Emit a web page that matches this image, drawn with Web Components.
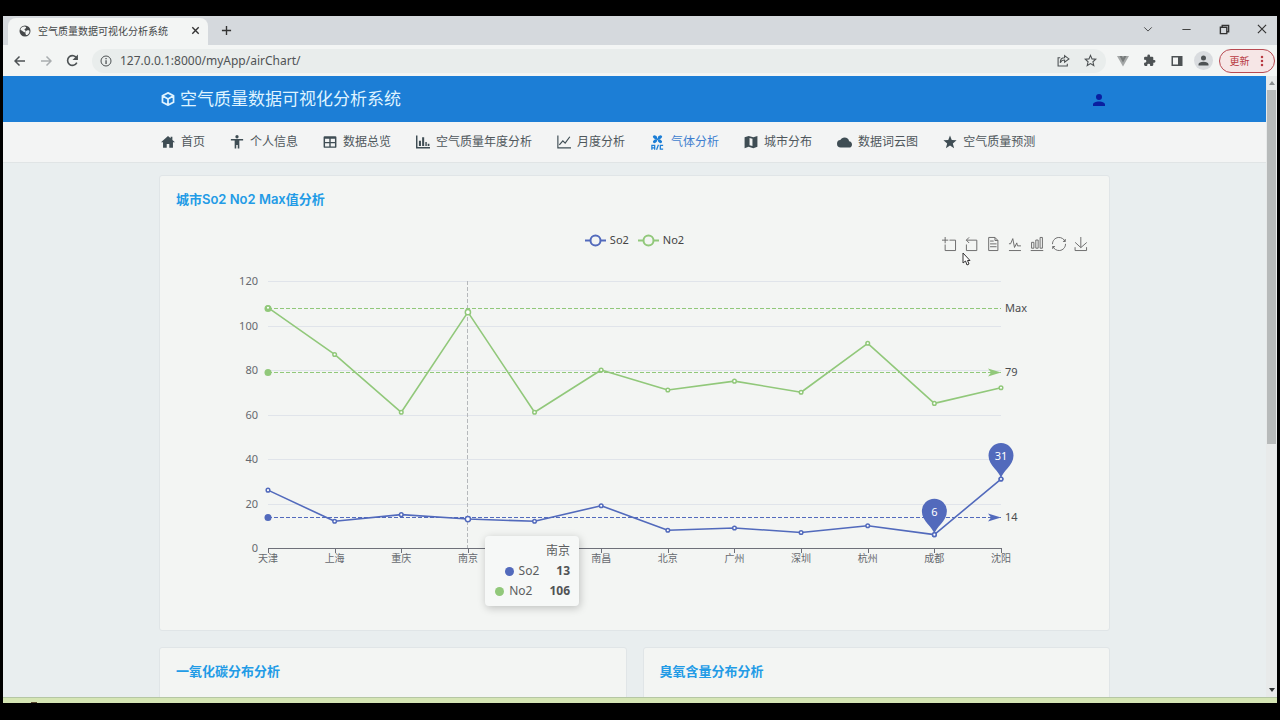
<!DOCTYPE html>
<html lang="zh-CN">
<head>
<meta charset="utf-8">
<meta name="viewport" content="width=device-width, initial-scale=1">
<title>空气质量数据可视化分析系统</title>
<style>
  html, body { height: 100%; margin: 0; }
  body {
    background: #000;
    overflow: hidden;
    font-family: "Noto Sans", "Noto Sans CJK SC", sans-serif;
    color: #495057;
  }
</style>
</head>
<body>
<desktop-screen>
  <browser-window>
    <site-header></site-header>
    <site-nav>
      <nav-item icon="home">首页</nav-item>
      <nav-item icon="person">个人信息</nav-item>
      <nav-item icon="table">数据总览</nav-item>
      <nav-item icon="bars">空气质量年度分析</nav-item>
      <nav-item icon="trend">月度分析</nav-item>
      <nav-item icon="aircon" active>气体分析</nav-item>
      <nav-item icon="map">城市分布</nav-item>
      <nav-item icon="cloud">数据词云图</nav-item>
      <nav-item icon="star">空气质量预测</nav-item>
    </site-nav>
    <card-grid>
      <panel-card wide><span slot="title">城市So2 No2 Max值分析</span><line-chart></line-chart></panel-card>
      <panel-card><span slot="title">一氧化碳分布分析</span></panel-card>
      <panel-card><span slot="title">臭氧含量分布分析</span></panel-card>
    </card-grid>
  </browser-window>
</desktop-screen>

<script>
const mount = (el, html) => { el.attachShadow({ mode: "open" }).innerHTML = html; };

const ICONS = {
  globe: '<circle cx="12" cy="12" r="11"/><path fill="#f3f5f4" d="M10 3c3 0 5 1 4 3s-3 1-3 3 3 1 2 4-4 1-6-1-4-1-4-3 2-5 7-6zM16 11c3-1 5 0 5 2s-2 6-5 7-2-2-3-3 0-5 3-6z"/>',
  close: '<path class="s" d="M5 5l14 14M19 5L5 19"/>',
  plus: '<path class="s" d="M12 2v20M2 12h20"/>',
  chevron: '<path class="s" d="M3 8l9 9 9-9"/>',
  minimize: '<path class="s" d="M3 12h18"/>',
  restoreWin: '<path class="s" d="M3 7h14v14H3zM7 7V3h14v14h-4"/>',
  back: '<path class="s" d="M22 12H3M11 3l-9 9 9 9"/>',
  forward: '<path class="s" d="M2 12h19M13 3l9 9-9 9"/>',
  reload: '<path class="s" d="M20 16a9 9 0 1 1 0-8"/><path d="M22 1v10H12z"/>',
  info: '<circle class="s" cx="12" cy="12" r="10"/><path d="M10.8 10.5h2.6V18h-2.6zM10.8 6h2.6v2.6h-2.6z"/>',
  share: '<path class="s" d="M6 7H2v15h17v-4M14 3l8 6-8 6v-4c-4 0-6 1-8 5 0-6 3-9 8-9z"/>',
  starLine: '<path class="s" d="M12 2.5l2.8 6.5 7 .6-5.3 4.7 1.6 7L12 17.6l-6.1 3.7 1.6-7L2.200 9.600l7-.6z"/>',
  vue: '<path fill="#a5a8a8" d="M0 2h24L12 23z"/><path fill="#777b7b" d="M5 2h5l2 4 2-4h5l-7 13z"/>',
  puzzle: '<path d="M20.5 11H19V7a2 2 0 0 0-2-2h-4V3.5a2.5 2.5 0 0 0-5 0V5H4a2 2 0 0 0-2 2v3.8h1.5a2.7 2.7 0 0 1 0 5.4H2V20a2 2 0 0 0 2 2h3.8v-1.5a2.7 2.7 0 0 1 5.4 0V22H17a2 2 0 0 0 2-2v-4h1.5a2.5 2.5 0 0 0 0-5z"/>',
  panel: '<path fill-rule="evenodd" d="M1 2h22v20H1zM4 5v14h10V5z"/>',
  user: '<path d="M12 4a4 4 0 1 1 0 8 4 4 0 0 1 0-8m0 10c4.420 0 8 1.790 8 4v2H4v-2c0-2.210 3.580-4 8-4z"/>',
  dots: '<circle cx="12" cy="4" r="2.5"/><circle cx="12" cy="12" r="2.5"/><circle cx="12" cy="20" r="2.5"/>',
  cube: '<path class="s" d="M12 1.5l9.5 5v11L12 22.5l-9.5-5v-11zM2.5 6.5L12 12l9.5-5.5M12 12v10.5"/>',
  home: '<path d="M12 1.5L0 12.5h3.5V22h6.300v-6.500h4.400V22h6.300v-9.500H24L19.500 8.400V3h-3v2.600z"/>',
  person: '<circle cx="12" cy="3" r="2.8"/><path d="M1.5 7h21v2.5H16V23h-2.700v-6h-2.600v6H8V9.500H1.500z"/>',
  table: '<path fill-rule="evenodd" d="M3 2h18a2 2 0 0 1 2 2v16a2 2 0 0 1-2 2H3a2 2 0 0 1-2-2V4a2 2 0 0 1 2-2zM3.5 6.500v5.300h7.300V6.500zM13.200 6.500v5.300h7.300V6.500zM3.500 14.300v5.200h7.300v-5.200zM13.200 14.300v5.200h7.300v-5.200z"/>',
  bars: '<path d="M0 1h2.500v19.500H24V23H0zM5 10h3.500v9H5zM10.500 4H14v15h-3.500zM16 12h2.500v7H16zM20 15h3v4h-3z"/>',
  trend: '<path class="s" d="M1.5 1v21H24M4 17l6-7 4 4 8-11"/>',
  aircon: '<g><ellipse cx="8" cy="3.5" rx="3.6" ry="2.6" transform="rotate(35 8 3.5)"/><ellipse cx="16" cy="3.5" rx="3.6" ry="2.6" transform="rotate(-35 16 3.5)"/><ellipse cx="8" cy="10" rx="3.6" ry="2.6" transform="rotate(-35 8 10)"/><ellipse cx="16" cy="10" rx="3.6" ry="2.6" transform="rotate(35 16 10)"/><path class="s" d="M8 3.5l8 6.5M16 3.5L8 10"/></g><path class="s" d="M3 23.500v-7h4.500v7M3 20.500h4.500M10.500 23.500l3-8M21 16.500h-4.500v6H21"/>',
  map: '<path fill-rule="evenodd" d="M1 4l7-2.5 8 2.5 7-2.500V20l-7 2.500L8 20l-7 2.500zM9.500 5v12.500l5 1.500V6.500z"/>',
  cloud: '<path d="M19.350 10.040A7.490 7.490 0 0 0 12 4C9.110 4 6.600 5.640 5.350 8.040A5.994 5.994 0 0 0 0 14a6 6 0 0 0 6 6h13a5 5 0 0 0 5-5c0-2.640-2.050-4.780-4.650-4.960z"/>',
  star: '<path d="M12 1l3 7.700 8.300.5-6.400 5.300 2.100 8.100L12 18.100 5 22.600l2.100-8.100L.7 9.200 9 8.700z"/>'
};

/* Single-colour glyph drawn on a 24-unit grid. */
customElements.define("app-icon", class extends HTMLElement {
  connectedCallback() {
    const size = this.getAttribute("size") || 14;
    mount(this, `<style>
      :host { display: block; flex: none; width: ${size}px; height: ${size}px; }
      svg { display: block; width: 100%; height: 100%; fill: currentColor; }
      .s { fill: none; stroke: currentColor; stroke-width: ${this.getAttribute("stroke") || 2}; }
    </style><svg viewBox="0 0 24 24" aria-hidden="true">${ICONS[this.getAttribute("name")]}</svg>`);
  }
});

customElements.define("desktop-screen", class extends HTMLElement {
  connectedCallback() {
    mount(this, `<style>
      :host { display: flex; flex-direction: column; box-sizing: border-box; height: 100vh; padding: 16px 3px 17px; }
      ::slotted(*) { flex: 1; min-height: 0; }
      .taskbar { height: 5px; border-top: 1px solid #b5c7a4; background: #d5e5b4; padding-left: 28px; display: flex; align-items: flex-end; flex: none; }
      .taskbar i { width: 6px; height: 1px; background: #5a4a30; }
    </style><slot></slot><div class="taskbar"><i></i></div>`);
  }
});

customElements.define("browser-window", class extends HTMLElement {
  connectedCallback() {
    mount(this, `<style>
      :host { display: flex; flex-direction: column; background: #f3f5f4; }
      button { border: 0; background: none; padding: 0; margin: 0; font: inherit; color: inherit; display: grid; place-items: center; }
      .tabs { display: flex; align-items: flex-end; height: 29px; padding-left: 5px; background: #d5d9dd; color: #333; flex: none; }
      .tab { display: flex; align-items: center; box-sizing: border-box; width: 200px; height: 27px; padding: 0 7px 2px 11px; border-radius: 8px 8px 0 0; background: #f3f5f4; font-size: 10px; color: #45484a; }
      .tab span { flex: 1; padding-left: 7px; white-space: nowrap; }
      .tab button { width: 12px; height: 12px; color: #333; }
      .new { width: 36px; height: 29px; }
      .win { display: flex; gap: 8px; margin-left: auto; height: 26px; align-self: flex-start; }
      .win button { width: 30px; }
      .bar { display: flex; align-items: center; height: 31px; padding: 0 2px 0 4px; flex: none; color: #4d5254; }
      .bar button { width: 26px; height: 24px; }
      .bar .ext button { width: 27px; }
      .off { color: #a9adaf; }
      .address { display: flex; align-items: center; flex: 1; height: 24px; margin: 0 3px 0 7px; padding: 0 2px 0 8px; border-radius: 12px; background: #e9edec; }
      .address button { width: 27px; }
      input { flex: 1; min-width: 0; border: 0; padding: 0; margin-left: 8px; background: none; outline: 0; font: 12px "Noto Sans", sans-serif; color: #505355; }
      .ext { display: flex; }
      .avatar { display: grid; place-items: center; width: 19px; height: 19px; border-radius: 50%; background: #d9dcdf; }
      .bar .update { display: flex; align-items: center; justify-content: center; gap: 6px; box-sizing: border-box; width: 56px; margin-left: 2px; padding-left: 3px; border: 1px solid #b84a52; border-radius: 12px; background: #f6e6e6; color: #b83a42; font-size: 10px; }
      .view { flex: 1; min-height: 0; display: flex; }
      .page { flex: 1; min-width: 0; overflow: hidden; background: #e9eeef; }
      .scroll { display: flex; flex-direction: column; align-items: center; width: 11px; background: #e8eaea; flex: none; }
      .up, .down { height: 14px; display: grid; place-items: center; flex: none; }
      .up::before, .down::before { content: ""; border: 3px solid transparent; }
      .up::before { border-bottom: 4px solid #8a8d8e; border-top: 0; }
      .down::before { border-top: 4px solid #303334; border-bottom: 0; }
      .thumb { flex: 353; width: 9px; background: #b7baba; }
      .track { flex: 239; }
    </style>
    <div class="tabs">
      <div class="tab"><app-icon name="globe" size="12"></app-icon><span>空气质量数据可视化分析系统</span><button aria-label="关闭标签页"><app-icon name="close" size="11" stroke="3"></app-icon></button></div>
      <button class="new" aria-label="新标签页"><app-icon name="plus" size="11" stroke="3"></app-icon></button>
      <div class="win">
        <button aria-label="搜索标签页"><app-icon name="chevron" size="10"></app-icon></button>
        <button aria-label="最小化"><app-icon name="minimize" size="11"></app-icon></button>
        <button aria-label="还原"><app-icon name="restoreWin" size="11" stroke="3"></app-icon></button>
        <button aria-label="关闭"><app-icon name="close" size="14"></app-icon></button>
      </div>
    </div>
    <div class="bar">
      <button aria-label="后退"><app-icon name="back" size="12" stroke="3"></app-icon></button>
      <button class="off" aria-label="前进"><app-icon name="forward" size="12" stroke="3"></app-icon></button>
      <button aria-label="刷新"><app-icon name="reload" size="13" stroke="3"></app-icon></button>
      <div class="address">
        <app-icon name="info" size="12"></app-icon>
        <input type="text" aria-label="地址" value="127.0.0.1:8000/myApp/airChart/">
        <button aria-label="分享"><app-icon name="share" size="13"></app-icon></button>
        <button aria-label="收藏"><app-icon name="starLine" size="13"></app-icon></button>
      </div>
      <div class="ext">
        <button aria-label="Vue"><app-icon name="vue" size="12"></app-icon></button>
        <button aria-label="扩展程序"><app-icon name="puzzle" size="13"></app-icon></button>
        <button aria-label="侧边栏"><app-icon name="panel" size="12"></app-icon></button>
        <button aria-label="用户"><span class="avatar"><app-icon name="user" size="15"></app-icon></span></button>
      </div>
      <button class="update">更新<app-icon name="dots" size="12"></app-icon></button>
    </div>
    <div class="view">
      <div class="page"><slot></slot></div>
      <div class="scroll"><div class="up"></div><div class="thumb"></div><div class="track"></div><div class="down"></div></div>
    </div>`);
  }
});

customElements.define("site-header", class extends HTMLElement {
  connectedCallback() {
    mount(this, `<style>
      :host { display: block; background: #1c7ed6; }
      .inner { display: flex; align-items: center; justify-content: space-between; box-sizing: border-box; max-width: 951px; height: 46px; margin: 0 auto; padding: 0 2px; }
      a { display: flex; align-items: center; gap: 5px; color: #dff3ff; font-size: 17px; line-height: 24px; text-decoration: none; }
      button { border: 0; background: none; padding: 2px 0 0; color: #0a1fa0; }
    </style>
    <div class="inner"><a href="#"><app-icon name="cube" size="14" stroke="3"></app-icon>空气质量数据可视化分析系统</a>
    <button aria-label="账户"><app-icon name="user" size="18"></app-icon></button></div>`);
  }
});

customElements.define("site-nav", class extends HTMLElement {
  connectedCallback() {
    mount(this, `<style>
      :host { display: block; background: #f3f4f4; border-bottom: 1px solid #e0e4e5; }
      nav { display: flex; align-items: center; gap: 25px; box-sizing: border-box; max-width: 951px; height: 40px; margin: 0 auto; padding: 0 2px; }
    </style><nav><slot></slot></nav>`);
  }
});

customElements.define("nav-item", class extends HTMLElement {
  connectedCallback() {
    mount(this, `<style>
      :host { display: block; }
      a { display: flex; align-items: center; gap: 6px; color: #4f575c; font-size: 12px; line-height: 18px; white-space: nowrap; text-decoration: none; }
      app-icon { color: #3f4d54; }
      :host([active]) a { color: #3f7fcf; }
      :host([active]) app-icon { color: #1c7ed6; }
    </style><a href="#"><app-icon name="${this.getAttribute("icon")}" size="${{ cloud: 15, aircon: 15 }[this.getAttribute("icon")] || 14}"></app-icon><slot></slot></a>`);
  }
});

customElements.define("card-grid", class extends HTMLElement {
  connectedCallback() {
    mount(this, `<style>
      :host { display: grid; grid-template-columns: 1fr 1fr; gap: 16px; box-sizing: border-box; max-width: 951px; margin: 12px auto 0; }
      ::slotted([wide]) { grid-column: 1 / -1; }
    </style><slot></slot>`);
  }
});

customElements.define("panel-card", class extends HTMLElement {
  connectedCallback() {
    mount(this, `<style>
      :host { display: block; padding: 12px 16px 15px; border: 1px solid #e0e5e7; border-radius: 3px; background: #f3f5f3; min-height: 120px; }
      h2 { margin: 0 0 18px; font: 600 13px/22px Inter, "Noto Sans CJK SC", sans-serif; color: #229be6; }
    </style><h2><slot name="title"></slot></h2><slot></slot>`);
  }
});

const TOOLS = [
  ["区域缩放", "M0,13.5h26.9 M13.5,26.9V0 M32.1,13.5H58V58H13.5 V32.1"],
  ["区域缩放还原", "M22,1.4L9.9,13.5l12.3,12.3 M10.3,13.5H54.9v44.6 H10.3v-26"],
  ["数据视图", "M17.5,17.3H33 M45.4,29.5h-28 M11.5,2v56H51V14.8L38.4,2H11.5z M38.4,2.2v12.7H51 M45.4,41.7h-28"],
  ["切换为折线图", "M4.1,28.9h7.1l9.3-22l7.4,38l9.7-19.7l3,12.8h14.9M4.1,58h51.4"],
  ["切换为柱状图", "M6.7,22.9h10V48h-10V22.9zM24.9,13h10v35h-10V13zM43.2,2h10v46h-10V2zM3.1,58h53.7"],
  ["还原", "M47,18.9h9.8V8.7 M56.3,20.1 C52.1,9,40.5,0.6,26.8,2.1C12.6,3.7,1.6,16.2,2.1,30.6 M13,41.1H3.1v10.2 M3.7,39.9c4.2,11.1,15.8,19.5,29.5,18 c14.2-1.6,25.2-14.1,24.7-28.5"],
  ["保存为图片", "M4.7,22.9L29.3,45.5L54.7,23.4M4.6,43.6L4.6,58L53.8,58L53.8,43.6M29.2,45.1L29.2,0"]
];

customElements.define("line-chart", class extends HTMLElement {
  connectedCallback() {
    const cities = ["天津", "上海", "重庆", "南京", "苏州", "南昌", "北京", "广州", "深圳", "杭州", "成都", "沈阳"];
    const so2 = [26, 12, 15, 13, 12, 19, 8, 9, 7, 10, 6, 31];
    const no2 = [108, 87, 61, 106, 61, 80, 71, 75, 70, 92, 65, 72];
    const blue = "#526abc", green = "#91c87a", paper = "#f3f5f3";
    const left = 92, right = 825, base = 288, top = 21, hover = 3;
    const x = i => left + i * (right - left) / (cities.length - 1);
    const y = v => base - v * (base - top) / 120;
    const row = v => Math.round(y(v)) + 0.5;

    const grid = [0, 20, 40, 60, 80, 100, 120].map(v =>
      (v ? `<path d="M${left} ${row(v)}H${right}" stroke="#e0e4ea"/>` : "") +
      `<text class="axis" x="${left - 10}" y="${row(v) + 3}" text-anchor="end">${v}</text>`).join("");
    const axis = `<path d="M${left} ${row(0)}H${right}" stroke="#6e7079"/>` + cities.map((c, i) =>
      `<path d="M${Math.round(x(i)) + 0.5} ${base}v5" stroke="#6e7079"/>` +
      (i === 4 ? "" : `<text class="axis city" x="${x(i)}" y="${base + 14}" text-anchor="middle">${c}</text>`)).join("");
    const rule = (v, color, label, arrow) =>
      `<path d="M${left} ${row(v)}H${right}" stroke="${color}" stroke-dasharray="4 2"/><circle cx="${left}" cy="${row(v)}" r="3.5" fill="${color}"/>` +
      (arrow ? `<path d="M${right} ${row(v)}l-13 -4 3 4 -3 4z" fill="${color}"/>` : "") +
      `<text class="mark" x="${right + 4}" y="${row(v) + 3}">${label}</text>`;
    const line = (data, color) =>
      `<polyline fill="none" stroke="${color}" stroke-width="1.6" stroke-linejoin="round" points="${data.map((v, i) => x(i) + "," + y(v)).join(" ")}"/>` +
      data.map((v, i) => `<circle cx="${x(i)}" cy="${y(v)}" r="${i === hover ? 2.6 : 1.8}" fill="#fff" stroke="${color}" stroke-width="1.5"/>`).join("");
    const pin = i => `<g transform="translate(${x(i)} ${y(so2[i])})"><path fill="${blue}" d="M0 0C-1 -8 -12.5 -13 -12.5 -23.5A12.5 12.5 0 1 1 12.5 -23.5C12.5 -13 1 -8 0 0z"/><circle r="1.8" fill="#fff" stroke="${blue}" stroke-width="1.5"/><text class="pin" y="-19" text-anchor="middle">${so2[i]}</text></g>`;

    mount(this, `<style>
      :host { display: block; position: relative; }
      button { border: 0; background: none; padding: 0; font: inherit; color: inherit; display: block; }
      .head { display: grid; grid-template-columns: 1fr auto 1fr; align-items: start; height: 32px; font-size: 11px; color: #444; }
      .legend { display: flex; gap: 9px; grid-column: 2; padding-top: 3px; }
      .legend button { display: flex; align-items: center; gap: 4px; line-height: 18px; }
      .legend svg { display: block; width: 21px; height: 14px; fill: ${paper}; stroke-width: 2; }
      .tools { display: flex; gap: 8px; justify-self: end; padding: 9px 5px 0 0; }
      .tools svg { display: block; width: 14px; height: 14px; fill: none; stroke: #666; stroke-width: 4; overflow: visible; }
      .plot { display: block; width: 100%; fill: none; }
      text { font-family: "Noto Sans", "Noto Sans CJK SC", sans-serif; font-size: 11px; fill: #4a4c4e; }
      .axis { fill: #66696f; }
      .city { font-size: 10px; }
      .pin { fill: #fff; }
      .tip { position: absolute; left: 33.7%; top: 308px; box-sizing: border-box; width: 94px; padding: 5px 9px; border-radius: 4px; background: #f6f8f7; box-shadow: 1px 2px 8px rgba(0,0,0,.22); font-size: 12px; line-height: 20px; color: #5c5e60; text-align: right; }
      .tip div { display: flex; align-items: center; justify-content: flex-end; }
      .tip i { width: 9px; height: 9px; border-radius: 50%; margin-right: 5px; }
      .tip b { margin-left: 17px; color: #515355; }
      .cursor { position: absolute; left: 86%; top: 24px; width: 9px; height: 14px; margin-left: -3px; fill: #fff; stroke: #333; }
    </style>
    <div class="head">
      <div class="legend">
        ${[["So2", blue], ["No2", green]].map(([n, c]) => `<button><svg viewBox="0 0 21 14" stroke="${c}"><path d="M0 7.5h21"/><circle cx="10.5" cy="7.5" r="5"/></svg>${n}</button>`).join("")}
      </div>
      <div class="tools">${TOOLS.map(([n, d]) => `<button aria-label="${n}"><svg viewBox="0 0 60 60"><path d="${d}"/></svg></button>`).join("")}</div>
    </div>
    <svg class="plot" viewBox="0 0 917 355" role="img" aria-label="So2 No2">
      ${grid}${axis}
      <path d="M${Math.round(x(hover)) - 0.5} ${top}V${base}" stroke="#b5b8bb" stroke-dasharray="4 2"/>
      ${rule(108, green, "Max", false)}${rule(79, green, "79", true)}${rule(14, blue, "14", true)}
      ${line(no2, green)}${line(so2, blue)}${pin(10)}${pin(11)}
    </svg>
    <div class="tip">南京<div><i style="background:${blue}"></i>So2<b>13</b></div><div><i style="background:${green}"></i>No2<b>106</b></div></div>
    <svg class="cursor" viewBox="0 0 9 14"><path d="M1 1v10l2.5-2 1.5 4 2-1-1.5-3.5H8z"/></svg>`);
  }
});
</script>
</body>
</html>
